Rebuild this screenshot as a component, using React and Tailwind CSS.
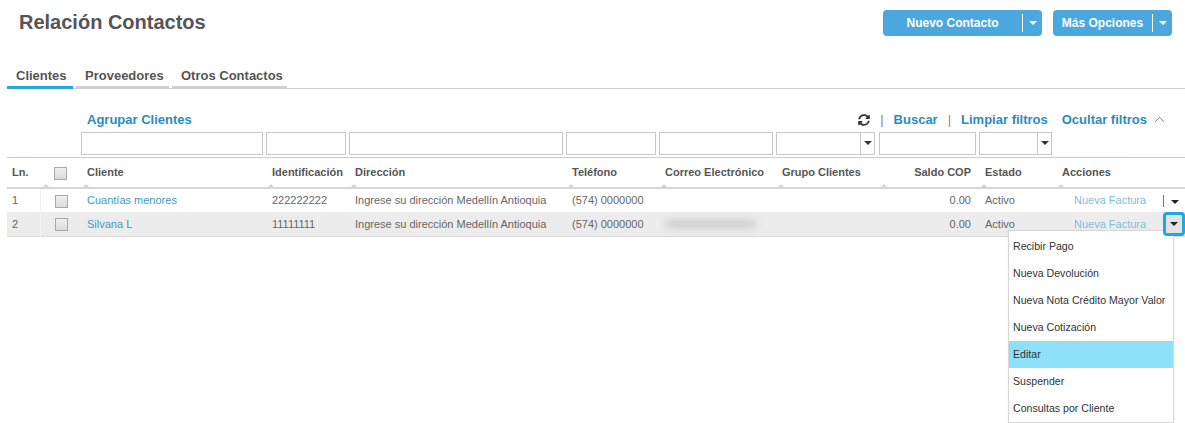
import React from 'react';
import { ChevronUp } from 'lucide-react';
import { FaSyncAlt } from 'react-icons/fa';

const cols = [33, 40, 185, 83, 217, 93, 117, 103, 100, 77, 130];

const headers = [
  { label: 'Ln.', cls: 'pl-[5px]' },
  { label: '', check: true },
  { label: 'Cliente', cls: 'pl-[7px]' },
  { label: 'Identificación', cls: 'pl-[7px]' },
  { label: 'Dirección', cls: 'pl-[7px]' },
  { label: 'Teléfono', cls: 'pl-[7px]' },
  { label: 'Correo Electrónico', cls: 'pl-[7px]' },
  { label: 'Grupo Clientes', cls: 'pl-[7px]' },
  { label: 'Saldo COP', cls: 'pr-[7px] text-right' },
  { label: 'Estado', cls: 'pl-[7px]' },
  { label: 'Acciones', cls: 'pl-[7px]' },
];

const rows = [
  { n: 1, name: 'Cuantías menores', id: '222222222', email: false },
  { n: 2, name: 'Silvana L', id: '11111111', email: true },
];

const menu = [
  'Recibir Pago',
  'Nueva Devolución',
  'Nueva Nota Crédito Mayor Valor',
  'Nueva Cotización',
  'Editar',
  'Suspender',
  'Consultas por Cliente',
];

const Caret = ({ color = 'border-t-white' }) => (
  <span className={`inline-block w-0 h-0 border-l-[4px] border-r-[4px] border-t-[4px] border-l-transparent border-r-transparent ${color}`} />
);

const Checkbox = () => (
  <span className="inline-block w-[13px] h-[13px] border border-[#a8a8a8] bg-gradient-to-b from-[#f0f0f0] to-[#dcdcdc] align-middle" />
);

const SplitButton = ({ label, width }) => (
  <div className={`flex items-center h-[26px] rounded-[4px] bg-[#4ba8de] text-white text-[12px] font-bold ${width}`}>
    <span className="flex-1 text-center">{label}</span>
    <span className="w-px h-[18px] bg-white" />
    <span className="w-[19px] flex justify-center"><Caret /></span>
  </div>
);

const FilterInput = ({ select }) => (
  <div className="h-[23px] border border-[#c8c8c8] bg-white flex justify-end">
    {select && (
      <div className="w-[14px] border-l border-[#c8c8c8] flex items-center justify-center">
        <Caret color="border-t-[#333]" />
      </div>
    )}
  </div>
);

export default function App() {
  return (
    <div className="w-[1185px] h-[423px] bg-white relative overflow-hidden text-[#666]" style={{ fontFamily: '"Liberation Sans", Arial, sans-serif' }}>
      <div className="flex items-start justify-between pl-[19px] pr-[13px] pt-[10px]">
        <h1 className="text-[20px] font-bold text-[#555] leading-[24px]">Relación Contactos</h1>
        <div className="flex gap-[11px]">
          <SplitButton label="Nuevo Contacto" width="w-[159px]" />
          <SplitButton label="Más Opciones" width="w-[119px]" />
        </div>
      </div>

      <div className="ml-[7px] mt-[30px] flex border-b border-[#cfcfcf] text-[13px] font-bold text-[#555]">
        <div className="w-[66px] pl-[9px] border-b-[3px] border-[#2aa6da] -mb-px">Clientes</div>
        <div className="ml-[3px] w-[93px] pl-[9px] border-b-[3px] border-[#cfcfcf] -mb-px">Proveedores</div>
        <div className="ml-[3px] w-[115px] pl-[9px] border-b-[3px] border-[#cfcfcf] -mb-px">Otros Contactos</div>
      </div>

      <div className="flex items-center justify-between pl-[87px] pr-[17px] mt-[22px] h-[18px] text-[13px] font-bold text-[#2b8cbf]">
        <span>Agrupar Clientes</span>
        <div className="flex items-center">
          <FaSyncAlt className="text-[#333] w-[12px] h-[12px]" />
          <span className="mx-[10px] font-normal text-[#888]">|</span>
          <span>Buscar</span>
          <span className="mx-[10px] font-normal text-[#888]">|</span>
          <span>Limpiar filtros</span>
          <span className="ml-[14px]">Ocultar filtros</span>
          <ChevronUp className="ml-[4px] text-[#777]" size={17} strokeWidth={1.3} />
        </div>
      </div>

      <table className="ml-[7px] mt-[3px] table-fixed border-collapse w-[1178px] text-[11px]">
        <colgroup>
          {cols.map((w, i) => (
            <col key={i} style={{ width: w }} />
          ))}
        </colgroup>
        <thead>
          <tr className="border-b border-[#ccc]">
            <th />
            <th />
            <th className="pl-px pr-[2px] pb-[2px]"><FilterInput /></th>
            <th className="pl-px pr-[2px] pb-[2px]"><FilterInput /></th>
            <th className="pl-px pr-[2px] pb-[2px]"><FilterInput /></th>
            <th className="pl-px pr-[2px] pb-[2px]"><FilterInput /></th>
            <th className="pl-px pr-[2px] pb-[2px]"><FilterInput /></th>
            <th className="pl-px pr-[3px] pb-[2px]"><FilterInput select /></th>
            <th className="pl-px pr-[2px] pb-[2px]"><FilterInput /></th>
            <th className="pl-px pr-[3px] pb-[2px]"><FilterInput select /></th>
            <th />
          </tr>
          <tr className="h-[31px] border-b-2 border-[#d6d6d6]">
            {headers.map((h, i) => (
              <th key={i} className={`relative font-bold text-[#555] text-left ${h.cls || ''}`}>
                {h.check ? <div className="pl-[14px] pt-[1px]"><Checkbox /></div> : h.label}
                {i > 0 && (
                  <span className="absolute left-[3px] bottom-0 w-0 h-0 border-l-[3px] border-r-[3px] border-b-[3px] border-l-transparent border-r-transparent border-b-[#d6d6d6]" />
                )}
              </th>
            ))}
          </tr>
        </thead>
        <tbody>
          {rows.map((r, i) => (
            <tr key={r.n} className={`h-[24px] ${i === 1 ? 'bg-[#ececec] border-b border-[#dcdcdc]' : ''}`}>
              <td className="pl-[5px] border-r border-[#f3f3f3]">{r.n}</td>
              <td className="pl-[14px]"><Checkbox /></td>
              <td className="pl-[7px] text-[#3d9bc6]">{r.name}</td>
              <td className="pl-[7px]">{r.id}</td>
              <td className="pl-[7px] whitespace-nowrap">Ingrese su dirección Medellín Antioquia</td>
              <td className="pl-[7px]">(574) 0000000</td>
              <td className="pl-[7px]">
                {r.email && <div className="h-[10px] w-[92px] rounded-full bg-[#d2d2d2] blur-[3px]" />}
              </td>
              <td />
              <td className="pr-[7px] text-right">0.00</td>
              <td className="pl-[7px]">Activo</td>
              <td className="pl-[19px]">
                <div className="flex items-center justify-between text-[#7cc0dd]">
                  <span>Nueva Factura</span>
                  {i === 0 ? (
                    <div className="flex items-center w-[22px] h-[16px]">
                      <span className="w-px h-[12px] bg-[#777]" />
                      <span className="ml-[7px]"><Caret color="border-t-[#222]" /></span>
                    </div>
                  ) : (
                    <div className="relative z-10 flex items-center justify-center w-[22px] h-[24px] border-[3px] border-[#1aa9e2] rounded-[4px] bg-[#e2e2e2]">
                      <Caret color="border-t-[#222]" />
                    </div>
                  )}
                </div>
              </td>
            </tr>
          ))}
        </tbody>
      </table>

      <div className="absolute left-[1008px] top-[230px] w-[166px] pt-[2px] bg-white border border-[#d6d6d6] text-[10.6px] text-[#333] shadow-[0_1px_2px_rgba(0,0,0,0.08)]">
        {menu.map((m) => (
          <div key={m} className={`h-[27px] flex items-center pl-[4px] whitespace-nowrap ${m === 'Editar' ? 'bg-[#8de0f8]' : ''}`}>
            {m}
          </div>
        ))}
      </div>
    </div>
  );
}
